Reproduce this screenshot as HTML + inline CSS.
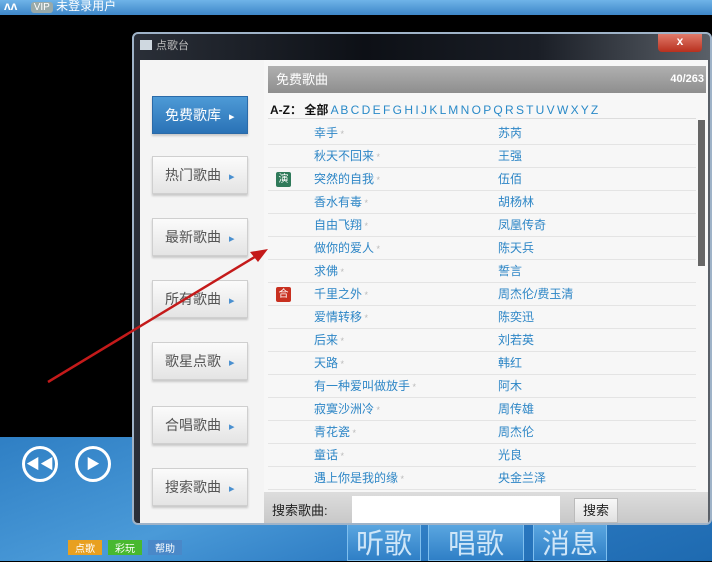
<!DOCTYPE html>
<html><head><meta charset="utf-8"><style>
*{margin:0;padding:0;box-sizing:border-box}
body{width:712px;height:561px;overflow:hidden;background:#000;position:relative;font-family:"Liberation Sans","Noto Sans CJK SC",sans-serif}
.abs{position:absolute}
.top{left:0;top:0;width:712px;height:15px;background:linear-gradient(#6fb3e8,#3d86c8);color:#fff;font-size:12px;line-height:13px}
.bottom{left:0;top:437px;width:712px;height:124px;background:linear-gradient(160deg,#2f7fc4 0%,#4a9ad8 40%,#2a78c0 70%,#1e6ab0 100%)}
.dlg{left:132px;top:32px;width:580px;height:493px;border:2px solid #9fb3c8;border-radius:6px;background:linear-gradient(90deg,#2a2f38,#0d1016 40%,#1a1e26 70%,#5a6068);overflow:hidden}
.left{left:6px;top:26px;width:124px;height:463px;background:#f4f4f4}
.btn{position:absolute;left:12px;width:96px;height:38px;background:linear-gradient(#fbfbfb,#e4e4e4);border:1px solid #cfcfcf;box-shadow:0 2px 2px #c8c8c8;font-size:14px;color:#555;line-height:36px;padding-left:12px}
.btn:after{content:"▸";color:#4a90d0;font-size:11px;margin-left:8px}
.btn.on{background:linear-gradient(#4d9ad6,#2a72b6);color:#fff;border-color:#2a6aa8}
.btn.on:after{color:#fff}
.right{left:130px;top:26px;width:444px;height:463px;background:#f7f7f7}
.hdr{left:4px;top:6px;width:438px;height:27px;background:linear-gradient(#b0b0b0,#8e8e8e);color:#fff;font-size:13px;line-height:27px;padding-left:8px}
.az{left:6px;top:41px;font-size:12px;color:#2a8ac8;letter-spacing:0;word-spacing:-1px;white-space:nowrap}
.az b{color:#111}
.row{position:absolute;left:4px;width:428px;height:23px;border-bottom:1px solid #e4e4e4;font-size:12px;color:#2d86c6;line-height:23px}
.row .s{position:absolute;left:46px}.row .a{position:absolute;left:230px}
.row .s:after{content:" *";color:#bbb;font-size:9px}
.sb{left:434px;top:60px;width:7px;height:146px;background:#666}
.srch{left:0;top:432px;width:444px;height:31px;background:linear-gradient(#ddd,#c8c8c8);font-size:13px;color:#222}
.tag{position:absolute;left:8px;top:4px;width:15px;height:15px;border-radius:2px;color:#fff;font-size:10px;line-height:15px;text-align:center}
.big{top:524px;height:37px;background:linear-gradient(#5aa6e0,#2f7fc6);color:#cfe6f8;font-size:28px;line-height:37px;text-align:center;border:1px solid #7fbfee}
</style></head><body>
<div class="abs top"><span style="margin-left:4px;font-weight:bold">ʌʌ</span> <span style="background:#9aa;border-radius:3px;padding:0 3px;font-size:10px;margin-left:10px">VIP</span> 未登录用户</div>
<div class="abs bottom"></div>
<div class="abs" style="left:22px;top:446px;width:36px;height:36px;border:3px solid #fff;border-radius:50%;color:#fff;text-align:center;line-height:30px;font-size:14px">◀◀</div>
<div class="abs" style="left:75px;top:446px;width:36px;height:36px;border:3px solid #fff;border-radius:50%;color:#fff;text-align:center;line-height:30px;font-size:14px">▶</div>
<div class="abs" style="left:68px;top:540px;width:34px;height:15px;background:#e8a020;font-size:10px;color:#fff;text-align:center">点歌</div>
<div class="abs" style="left:108px;top:540px;width:34px;height:15px;background:#48b830;font-size:10px;color:#fff;text-align:center">彩玩</div>
<div class="abs" style="left:148px;top:540px;width:34px;height:15px;background:#4a88c8;font-size:10px;color:#fff;text-align:center">帮助</div>
<div class="abs big" style="left:347px;width:74px">听歌</div>
<div class="abs big" style="left:428px;width:96px">唱歌</div>
<div class="abs big" style="left:533px;width:74px">消息</div>
<div class="abs dlg">
 <div class="abs" style="left:6px;top:6px;width:12px;height:10px;background:#cfd8e0"></div>
 <div class="abs" style="left:22px;top:3px;color:#bbb;font-size:11px">点歌台</div>
 <div class="abs" style="left:524px;top:0;width:44px;height:18px;background:linear-gradient(#e07a6a,#b8301e);border-radius:0 0 4px 4px;color:#fff;text-align:center;font-size:12px;font-weight:bold">x</div>
 <div class="abs left">
  <div class="btn on" style="top:36px">免费歌库</div>
  <div class="btn" style="top:96px">热门歌曲</div>
  <div class="btn" style="top:158px">最新歌曲</div>
  <div class="btn" style="top:220px">所有歌曲</div>
  <div class="btn" style="top:282px">歌星点歌</div>
  <div class="btn" style="top:346px">合唱歌曲</div>
  <div class="btn" style="top:408px">搜索歌曲</div>
 </div>
 <div class="abs right">
  <div class="abs hdr">免费歌曲<span style="position:absolute;right:2px;font-size:11px;font-weight:bold">40/263</span></div>
  <div class="abs az"><b>A-Z： 全部</b> A B C D E F G H I J K L M N O P Q R S T U V W X Y Z</div>
  <div class="abs" style="left:4px;top:58px;width:428px;height:1px;background:#ddd"></div>
  <div class="row" style="top:62px"><span class="s">幸手</span><span class="a">苏芮</span></div>
  <div class="row" style="top:85px"><span class="s">秋天不回来</span><span class="a">王强</span></div>
  <div class="row" style="top:108px"><span class="tag" style="background:#2f7a5a">演</span><span class="s">突然的自我</span><span class="a">伍佰</span></div>
  <div class="row" style="top:131px"><span class="s">香水有毒</span><span class="a">胡杨林</span></div>
  <div class="row" style="top:154px"><span class="s">自由飞翔</span><span class="a">凤凰传奇</span></div>
  <div class="row" style="top:177px"><span class="s">做你的爱人</span><span class="a">陈天兵</span></div>
  <div class="row" style="top:200px"><span class="s">求佛</span><span class="a">誓言</span></div>
  <div class="row" style="top:223px"><span class="tag" style="background:#c83020">合</span><span class="s">千里之外</span><span class="a">周杰伦/费玉清</span></div>
  <div class="row" style="top:246px"><span class="s">爱情转移</span><span class="a">陈奕迅</span></div>
  <div class="row" style="top:269px"><span class="s">后来</span><span class="a">刘若英</span></div>
  <div class="row" style="top:292px"><span class="s">天路</span><span class="a">韩红</span></div>
  <div class="row" style="top:315px"><span class="s">有一种爱叫做放手</span><span class="a">阿木</span></div>
  <div class="row" style="top:338px"><span class="s">寂寞沙洲冷</span><span class="a">周传雄</span></div>
  <div class="row" style="top:361px"><span class="s">青花瓷</span><span class="a">周杰伦</span></div>
  <div class="row" style="top:384px"><span class="s">童话</span><span class="a">光良</span></div>
  <div class="row" style="top:407px"><span class="s">遇上你是我的缘</span><span class="a">央金兰泽</span></div>
  <div class="abs sb"></div>
  <div class="abs srch"><span style="position:absolute;left:8px;top:8px">搜索歌曲:</span>
   <div class="abs" style="left:88px;top:4px;width:208px;height:27px;background:#fff"></div>
   <div class="abs" style="left:310px;top:6px;width:44px;height:25px;background:linear-gradient(#f8f8f8,#e0e0e0);border:1px solid #bbb;text-align:center;line-height:23px">搜索</div>
  </div>
 </div>
</div>
<svg class="abs" style="left:0;top:0" width="712" height="561"><line x1="48" y1="382" x2="258" y2="255" stroke="#c41a1a" stroke-width="2.5"/><polygon points="268,249 250,252 258,262" fill="#c41a1a"/></svg>
</body></html>
